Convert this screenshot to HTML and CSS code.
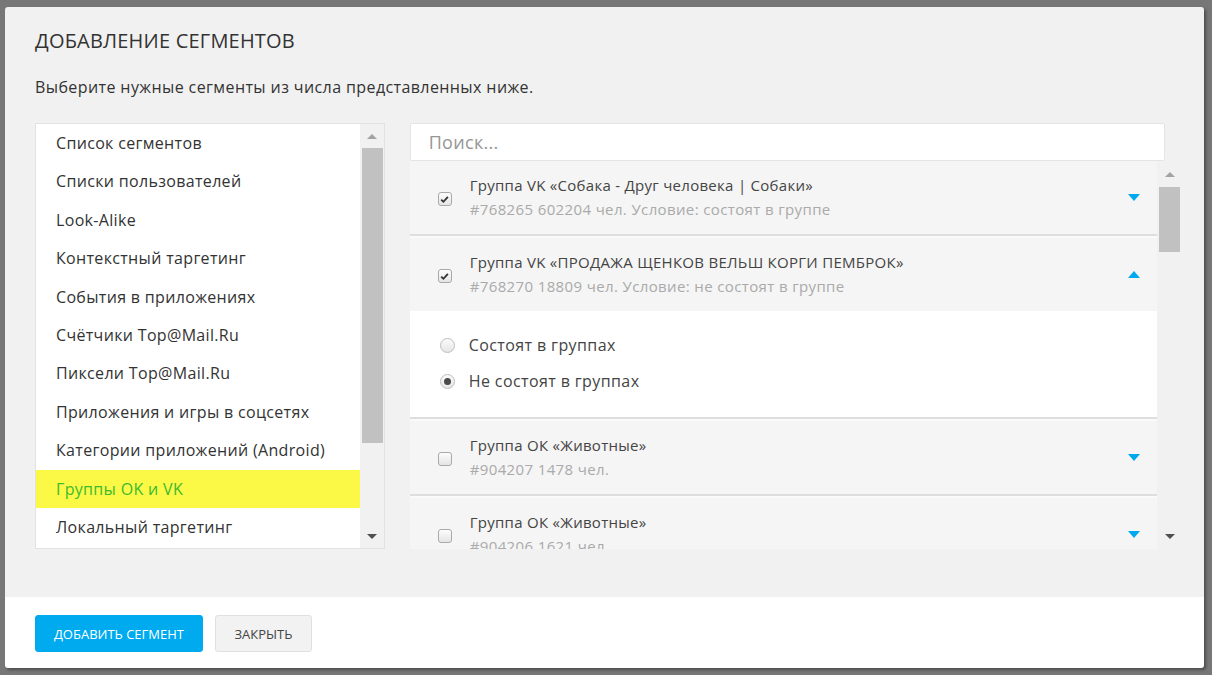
FILE: index.html
```html
<!DOCTYPE html>
<html lang="ru">
<head>
<meta charset="utf-8">
<title>Добавление сегментов</title>
<link rel="stylesheet" href="styles.css">
</head>
<body>
<div class="modal">
  <div class="modal-body">
    <h1 class="title">ДОБАВЛЕНИЕ СЕГМЕНТОВ</h1>
    <p class="subtitle">Выберите нужные сегменты из числа представленных ниже.</p>
    <div class="columns">
      <div class="cat-box">
        <ul class="cat-list">
          <li class="cat">Список сегментов</li>
          <li class="cat">Списки пользователей</li>
          <li class="cat">Look-Alike</li>
          <li class="cat">Контекстный таргетинг</li>
          <li class="cat">События в приложениях</li>
          <li class="cat">Счётчики Top@Mail.Ru</li>
          <li class="cat">Пиксели Top@Mail.Ru</li>
          <li class="cat">Приложения и игры в соцсетях</li>
          <li class="cat">Категории приложений (Android)</li>
          <li class="cat cat-active">Группы OK и VK</li>
          <li class="cat">Локальный таргетинг</li>
        </ul>
        <div class="scrollbar">
          <div class="sb-btn"><span class="sb-arrow sb-up sb-dim"></span></div>
          <div class="sb-track"><div class="sb-thumb sb-thumb-left"></div></div>
          <div class="sb-btn"><span class="sb-arrow sb-down"></span></div>
        </div>
      </div>
      <div class="right">
        <div class="search">Поиск...</div>
        <div class="groups-box">
          <div class="groups">
            <div class="group">
              <span class="check checked"><svg viewBox="0 0 11 11" width="11" height="11"><path d="M2.2 5.6 L4.4 7.8 L8.9 2.8" fill="none" stroke="#333" stroke-width="1.8"/></svg></span>
              <div class="g-text">
                <div class="g-title">Группа VK «Собака - Друг человека | Собаки»</div>
                <div class="g-sub">#768265 602204 чел. Условие: состоят в группе</div>
              </div>
              <span class="tri tri-down"></span>
            </div>
            <div class="group group-open">
              <span class="check checked"><svg viewBox="0 0 11 11" width="11" height="11"><path d="M2.2 5.6 L4.4 7.8 L8.9 2.8" fill="none" stroke="#333" stroke-width="1.8"/></svg></span>
              <div class="g-text">
                <div class="g-title">Группа VK «ПРОДАЖА ЩЕНКОВ ВЕЛЬШ КОРГИ ПЕМБРОК»</div>
                <div class="g-sub">#768270 18809 чел. Условие: не состоят в группе</div>
              </div>
              <span class="tri tri-up"></span>
            </div>
            <div class="panel">
              <label class="radio-row"><span class="radio"></span>Состоят в группах</label>
              <label class="radio-row"><span class="radio radio-on"></span>Не состоят в группах</label>
            </div>
            <div class="group">
              <span class="check"></span>
              <div class="g-text">
                <div class="g-title">Группа ОК «Животные»</div>
                <div class="g-sub">#904207 1478 чел.</div>
              </div>
              <span class="tri tri-down"></span>
            </div>
            <div class="group">
              <span class="check"></span>
              <div class="g-text">
                <div class="g-title">Группа ОК «Животные»</div>
                <div class="g-sub">#904206 1621 чел.</div>
              </div>
              <span class="tri tri-down"></span>
            </div>
          </div>
          <div class="scrollbar scrollbar-right">
            <div class="sb-btn sb-btn-r"><span class="sb-arrow sb-up sb-dim"></span></div>
            <div class="sb-track"><div class="sb-thumb sb-thumb-right"></div></div>
            <div class="sb-btn sb-btn-r"><span class="sb-arrow sb-down"></span></div>
          </div>
        </div>
      </div>
    </div>
  </div>
  <div class="modal-footer">
    <button class="btn btn-primary">ДОБАВИТЬ СЕГМЕНТ</button>
    <button class="btn btn-default">ЗАКРЫТЬ</button>
  </div>
</div>
</body>
</html>
```

FILE: styles.css
```css
* { box-sizing: border-box; }
html, body { margin: 0; padding: 0; }
body {
  background: #777777;
  font-family: "Open Sans", "Noto Sans", sans-serif;
  color: #333;
  width: 1212px;
  height: 675px;
  overflow: hidden;
  padding: 7px 0 0 5px;
}
.modal {
  width: 1199px;
  height: 661px;
  border-radius: 3px;
  overflow: hidden;
  box-shadow: 2px 2px 3px rgba(0,0,0,0.35);
  display: flex;
  flex-direction: column;
}
.modal-body {
  background: #f1f1f1;
  height: 590px;
  flex: none;
  padding: 20px 23px 0 30px;
}
.title {
  margin: 0;
  font-size: 20px;
  line-height: 28px;
  font-weight: 400;
  letter-spacing: 0.2px;
  color: #333;
}
.subtitle {
  margin: 21px 0 0;
  font-size: 16px;
  line-height: 22px;
  letter-spacing: 0.4px;
  color: #333;
}
.columns {
  margin-top: 25px;
  display: flex;
  gap: 25px;
}
.cat-box {
  width: 350px;
  height: 426px;
  border: 1px solid #e2e2e2;
  background: #fff;
  display: flex;
}
.cat-list {
  list-style: none;
  margin: 0;
  padding: 0;
  flex: 1;
  overflow: hidden;
}
.cat {
  font-size: 16px;
  line-height: 22.4px;
  letter-spacing: 0.33px;
  padding: 8px 20px;
  color: #333;
  white-space: nowrap;
}
.cat-active {
  background: #fbf846;
  color: #3dbb2f;
}
.scrollbar {
  width: 24px;
  background: #f1f1f1;
  display: flex;
  flex-direction: column;
}
.sb-btn {
  height: 24px;
  display: flex;
  align-items: center;
  justify-content: center;
  padding-left: 1px;
}
.sb-btn-r { height: 26px; }
.sb-track { flex: 1; }
.sb-thumb {
  background: #c1c1c1;
  margin: 0 1px 0 2px;
}
.sb-thumb-left { height: 295px; }
.sb-thumb-right { height: 65px; }
.sb-arrow {
  width: 0;
  height: 0;
  border-left: 5px solid transparent;
  border-right: 5px solid transparent;
}
.sb-up { border-bottom: 5px solid #505050; }
.sb-down { border-top: 5px solid #505050; }
.sb-up.sb-dim { border-bottom-color: #a3a3a3; }
.right {
  width: 772px;
  display: flex;
  flex-direction: column;
}
.search {
  width: 755px;
  height: 38px;
  background: #fff;
  border: 1px solid #e4e4e4;
  border-radius: 2px;
  font-size: 18px;
  line-height: 36px;
  letter-spacing: 0.3px;
  padding-left: 18px;
  color: #969696;
}
.groups-box {
  height: 388px;
  display: flex;
}
.groups {
  flex: 1;
  overflow: hidden;
}
.group {
  background: #f5f5f5;
  border-bottom: 2px solid #dedede;
  border-top: 2px solid #fafafa;
  height: 77px;
  display: flex;
  align-items: center;
  padding: 0 17px 0 28px;
}
.group:first-child {
  border-top: none;
  height: 75px;
}
.group-open {
  border-bottom: none;
  height: 75px;
}
.check {
  width: 14px;
  height: 14px;
  border: 1px solid #a9a9a9;
  border-radius: 3px;
  background: linear-gradient(#fdfdfd, #e4e4e4);
  display: flex;
  align-items: center;
  justify-content: center;
  margin-top: 3px;
  flex: none;
}
.check svg { display: block; }
.g-text {
  flex: 1;
  margin-left: 18px;
  margin-top: -2px;
}
.g-title {
  font-size: 15px;
  line-height: 24px;
  letter-spacing: 0.28px;
  color: #444;
  white-space: nowrap;
}
.g-sub {
  font-size: 15px;
  line-height: 24px;
  letter-spacing: 0.37px;
  color: #aaa;
  white-space: nowrap;
}
.tri {
  width: 0;
  height: 0;
  border-left: 6px solid transparent;
  border-right: 6px solid transparent;
  flex: none;
}
.tri-down { border-top: 7px solid #00a8f0; }
.tri-up { border-bottom: 7px solid #00a8f0; }
.panel {
  background: #fff;
  border-bottom: 2px solid #dedede;
  padding: 16px 0 18px 30px;
}
.radio-row {
  display: flex;
  align-items: center;
  height: 36px;
  font-size: 16px;
  letter-spacing: 0.4px;
  color: #444;
}
.radio {
  width: 15px;
  height: 15px;
  border: 1px solid #bdbdbd;
  border-radius: 50%;
  background: linear-gradient(#fbfbfb, #e6e6e6);
  margin-right: 14px;
  display: flex;
  align-items: center;
  justify-content: center;
}
.radio-on::after {
  content: "";
  width: 7px;
  height: 7px;
  border-radius: 50%;
  background: #4a4a4a;
}
.modal-footer {
  background: #fff;
  flex: 1;
  min-height: 0;
  padding: 18px 30px 0;
  display: flex;
  align-items: flex-start;
  gap: 12px;
}
.btn {
  font-family: "Open Sans", "Noto Sans", sans-serif;
  font-size: 13px;
  height: 37px;
  border-radius: 3px;
  padding: 0;
  white-space: nowrap;
  text-align: center;
  cursor: pointer;
}
.btn-primary {
  background: #00aaef;
  border: 1px solid #00aaef;
  color: #fff;
  width: 168px;
}
.btn-default {
  background: #f2f2f2;
  border: 1px solid #e0e0e0;
  color: #444;
  width: 97px;
}
```
